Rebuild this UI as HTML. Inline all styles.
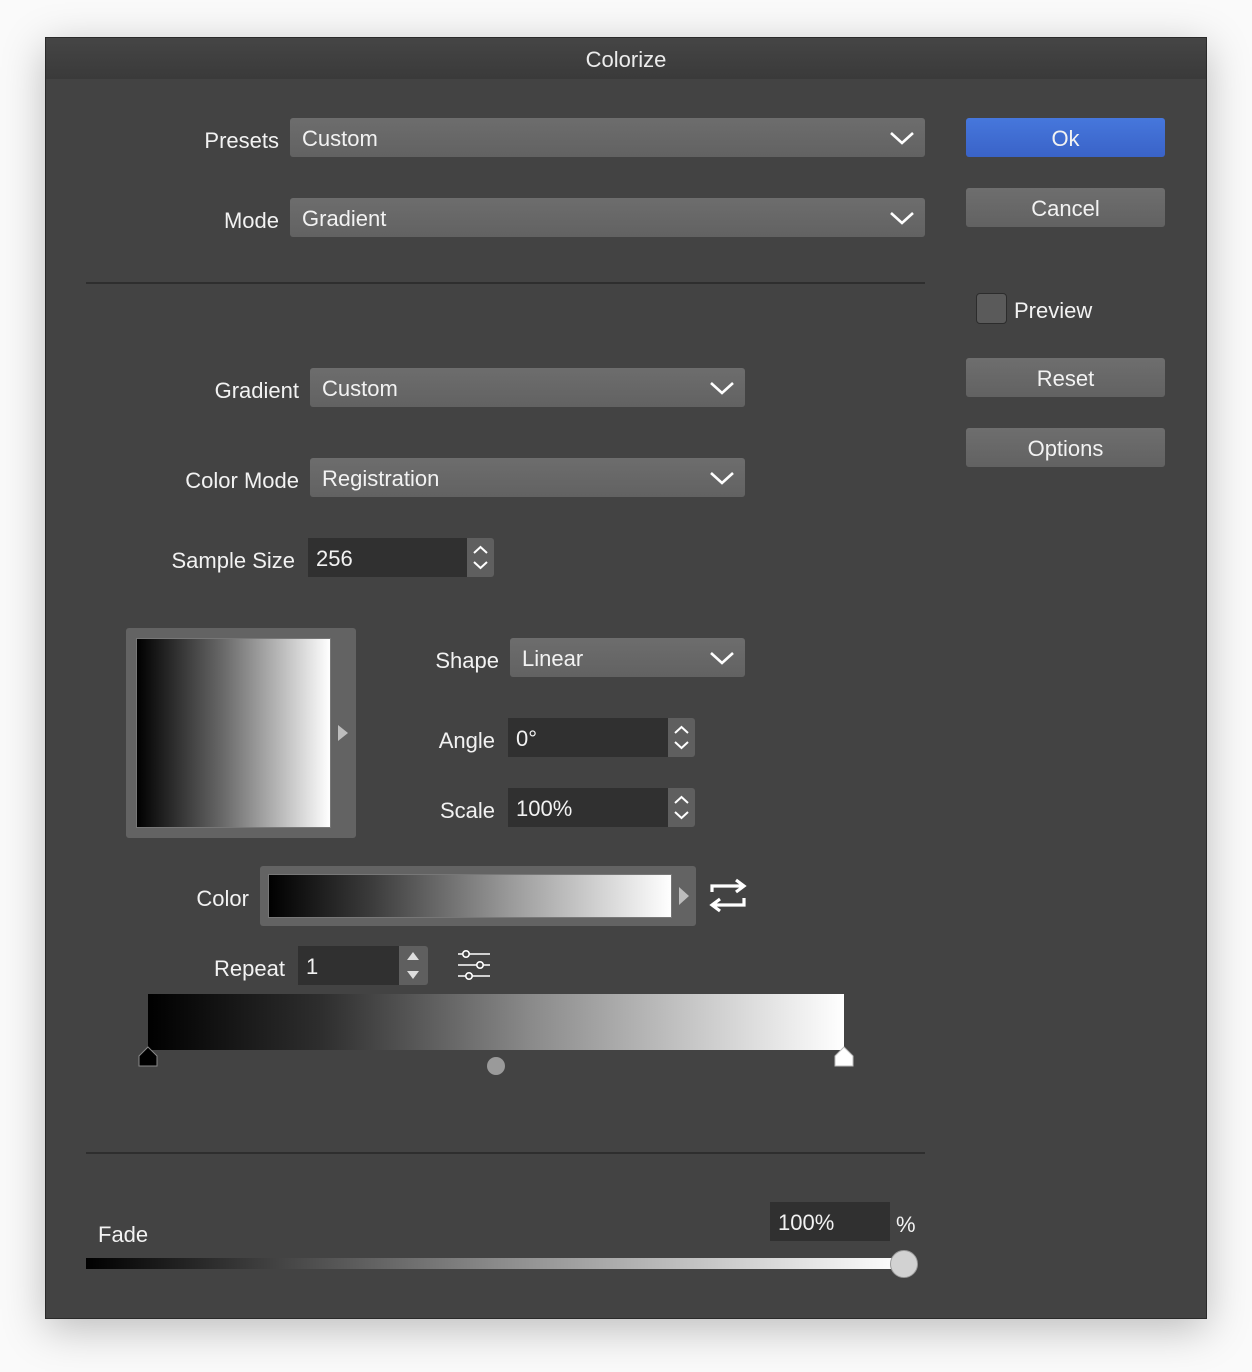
<!DOCTYPE html>
<html><head><meta charset="utf-8">
<style>
*{box-sizing:border-box;margin:0;padding:0}
body{width:1252px;height:1372px;background:#fafafa;position:relative;overflow:hidden;font-family:"Liberation Sans",sans-serif;color:#f2f2f2;font-size:22px}
.win{position:absolute;left:45px;top:37px;width:1162px;height:1282px;background:#434343;border:1px solid #2a2a2a;box-shadow:0 10px 40px rgba(0,0,0,.25)}
.title{position:absolute;left:0;top:0;width:100%;height:41px;background:linear-gradient(#454545,#3a3a3a);text-align:center;line-height:44px;font-size:22px;color:#ececec}
.a{position:absolute}
.lbl{position:absolute;text-align:right;line-height:43px;white-space:nowrap}
.dd{position:absolute;height:39px;background:linear-gradient(#6d6d6d,#626262);border-radius:3px;line-height:42px;padding-left:12px}
.dd svg{position:absolute;right:10px;top:13px}
.fld{position:absolute;height:39px;background:#303030;line-height:42px;padding-left:8px}
.stp{position:absolute;height:39px;width:27px;background:#5f5f5f;border-radius:0 3px 3px 0}
.btn{position:absolute;left:921px;width:199px;height:39px;background:linear-gradient(#6e6e6e,#626262);border-radius:3px;text-align:center;line-height:42px}
.sep{position:absolute;left:41px;width:839px;height:2px;background:#2e2e2e}
</style></head><body>
<div class="win">
<div class="title">Colorize</div>
</div>
<div class="a" style="left:0;top:0">
<div class="lbl" style="left:150px;width:129px;top:119px">Presets</div>
<div class="dd" style="left:290px;top:118px;width:635px">Custom<svg width="26" height="14"><path d="M2 2 L13 12 L24 2" fill="none" stroke="#fff" stroke-width="2.6"/></svg></div>
<div class="lbl" style="left:150px;width:129px;top:199px">Mode</div>
<div class="dd" style="left:290px;top:198px;width:635px">Gradient<svg width="26" height="14"><path d="M2 2 L13 12 L24 2" fill="none" stroke="#fff" stroke-width="2.6"/></svg></div>
<div class="sep" style="left:86px;top:282px"></div>

<div class="lbl" style="left:100px;width:199px;top:369px">Gradient</div>
<div class="dd" style="left:310px;top:368px;width:435px">Custom<svg width="26" height="14"><path d="M2 2 L13 12 L24 2" fill="none" stroke="#fff" stroke-width="2.6"/></svg></div>
<div class="lbl" style="left:100px;width:199px;top:459px">Color Mode</div>
<div class="dd" style="left:310px;top:458px;width:435px">Registration<svg width="26" height="14"><path d="M2 2 L13 12 L24 2" fill="none" stroke="#fff" stroke-width="2.6"/></svg></div>
<div class="lbl" style="left:100px;width:195px;top:539px">Sample Size</div>
<div class="fld" style="left:308px;top:538px;width:159px">256</div>
<div class="stp" style="left:467px;top:538px"><svg width="27" height="39"><path d="M7 15 L13.5 9 L20 15 M7 24 L13.5 30 L20 24" fill="none" stroke="#fff" stroke-width="2"/></svg></div>

<div class="a" style="left:126px;top:628px;width:230px;height:210px;background:#636363;border-radius:3px"></div>
<div class="a" style="left:136px;top:638px;width:195px;height:190px;background:linear-gradient(90deg,#000,#6a6a6a 45%,#fff);border:1px solid #777"></div>
<svg class="a" style="left:337px;top:724px" width="12" height="18"><path d="M1 1 L11 9 L1 17Z" fill="#bdbdbd"/></svg>

<div class="lbl" style="left:380px;width:119px;top:639px">Shape</div>
<div class="dd" style="left:510px;top:638px;width:235px">Linear<svg width="26" height="14"><path d="M2 2 L13 12 L24 2" fill="none" stroke="#fff" stroke-width="2.6"/></svg></div>
<div class="lbl" style="left:380px;width:115px;top:719px">Angle</div>
<div class="fld" style="left:508px;top:718px;width:160px">0°</div>
<div class="stp" style="left:668px;top:718px"><svg width="27" height="39"><path d="M7 15 L13.5 9 L20 15 M7 24 L13.5 30 L20 24" fill="none" stroke="#fff" stroke-width="2"/></svg></div>
<div class="lbl" style="left:380px;width:115px;top:789px">Scale</div>
<div class="fld" style="left:508px;top:788px;width:160px">100%</div>
<div class="stp" style="left:668px;top:788px"><svg width="27" height="39"><path d="M7 15 L13.5 9 L20 15 M7 24 L13.5 30 L20 24" fill="none" stroke="#fff" stroke-width="2"/></svg></div>

<div class="lbl" style="left:150px;width:99px;top:877px">Color</div>
<div class="a" style="left:260px;top:866px;width:436px;height:60px;background:#636363;border-radius:3px"></div>
<div class="a" style="left:268px;top:874px;width:404px;height:44px;background:linear-gradient(90deg,#000,#3a3a3a 25%,#9a9a9a 60%,#fff);border:1px solid #777"></div>
<svg class="a" style="left:678px;top:886px" width="12" height="20"><path d="M1 1 L11 10 L1 19Z" fill="#bdbdbd"/></svg>
<svg class="a" style="left:708px;top:878px" width="40" height="36"><path d="M4 14 V8 H34 M28 2 L36 8 L28 14" fill="none" stroke="#fff" stroke-width="3.2"/><path d="M36 20 V27 H6 M12 21 L4 27 L12 33" fill="none" stroke="#fff" stroke-width="3.2"/></svg>

<div class="lbl" style="left:150px;width:135px;top:947px">Repeat</div>
<div class="fld" style="left:298px;top:946px;width:102px">1</div>
<div class="stp" style="left:399px;top:946px;width:29px"><svg width="29" height="39"><path d="M8 14 L14 6 L20 14Z M8 25 L14 33 L20 25Z" fill="#ddd"/></svg></div>
<svg class="a" style="left:456px;top:948px" width="36" height="34"><g stroke="#fff" stroke-width="1.6" fill="#434343"><path d="M2 6 H34 M2 17 H34 M2 28 H34"/><circle cx="10" cy="6" r="3.2"/><circle cx="24" cy="17" r="3.2"/><circle cx="13" cy="28" r="3.2"/></g></svg>

<div class="a" style="left:148px;top:994px;width:696px;height:56px;background:linear-gradient(90deg,#000,#2e2e2e 25%,#8a8a8a 55%,#fff)"></div>
<svg class="a" style="left:137px;top:1046px" width="22" height="22"><path d="M11 1 L20 10 V20 H2 V10Z" fill="#000" stroke="#888" stroke-width="1"/></svg>
<svg class="a" style="left:833px;top:1046px" width="22" height="22"><path d="M11 1 L20 10 V20 H2 V10Z" fill="#fff" stroke="#bbb" stroke-width="1"/></svg>
<div class="a" style="left:487px;top:1057px;width:18px;height:18px;border-radius:50%;background:#9a9a9a"></div>

<div class="sep" style="left:86px;top:1152px"></div>
<div class="lbl" style="left:98px;top:1213px;text-align:left">Fade</div>
<div class="fld" style="left:770px;top:1202px;width:120px">100%</div>
<div class="lbl" style="left:896px;top:1203px;text-align:left">%</div>
<div class="a" style="left:86px;top:1258px;width:820px;height:11px;background:linear-gradient(90deg,#000,#3a3a3a 20%,#8a8a8a 50%,#fff)"></div>
<div class="a" style="left:890px;top:1250px;width:28px;height:28px;border-radius:50%;background:#d2d2d2;border:1px solid #999"></div>

<div class="btn" style="left:966px;top:118px;background:linear-gradient(#4677dc,#3a63c8)">Ok</div>
<div class="btn" style="left:966px;top:188px">Cancel</div>
<div class="a" style="left:976px;top:293px;width:31px;height:31px;background:#5a5a5a;border:1px solid #2c2c2c;border-radius:4px"></div>
<div class="lbl" style="left:1014px;top:289px;text-align:left">Preview</div>
<div class="btn" style="left:966px;top:358px">Reset</div>
<div class="btn" style="left:966px;top:428px">Options</div>
</div>
</body></html>
